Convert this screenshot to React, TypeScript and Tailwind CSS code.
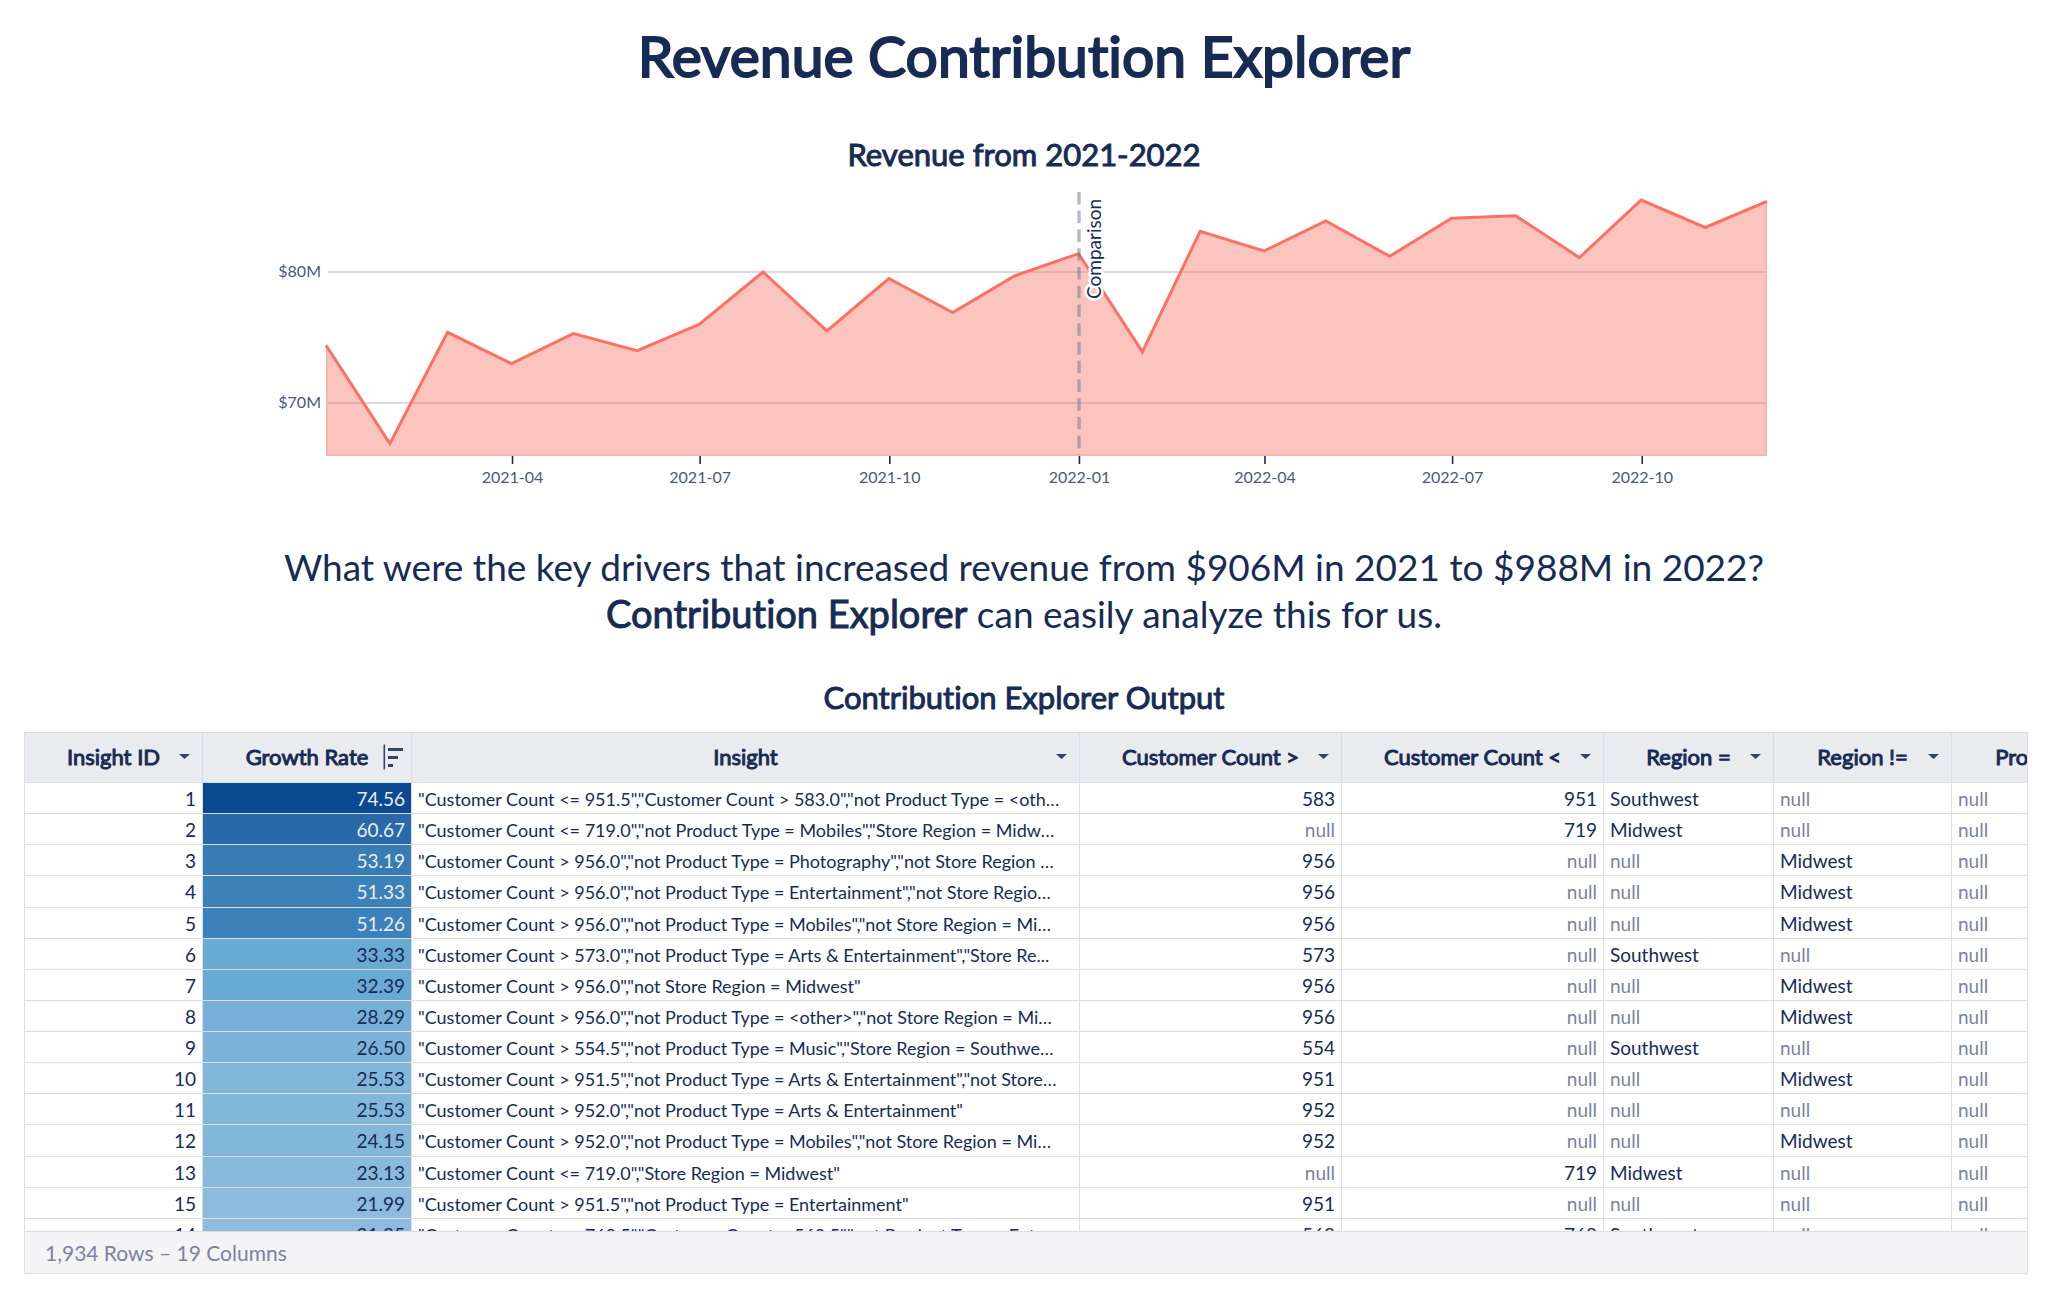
import { useState } from 'react';

const NAVY = '#172b54';

const columns = [
  { key: 'id', label: 'Insight ID', numeric: true },
  { key: 'growth', label: 'Growth Rate', numeric: true },
  { key: 'insight', label: 'Insight', numeric: false },
  { key: 'countGt', label: 'Customer Count >', numeric: true },
  { key: 'countLt', label: 'Customer Count <', numeric: true },
  { key: 'region', label: 'Region =', numeric: false },
  { key: 'regionNot', label: 'Region !=', numeric: false },
  { key: 'product', label: 'Product Type =', numeric: false },
] as const;

type Row = {
  id: number;
  growth: string;
  insight: string;
  countGt: number | null;
  countLt: number | null;
  region: string | null;
  regionNot: string | null;
  product: string | null;
};

const row = (
  id: number,
  growth: string,
  insight: string,
  countGt: number | null,
  countLt: number | null,
  region: string | null,
  regionNot: string | null
): Row => ({ id, growth, insight, countGt, countLt, region, regionNot, product: null });

const rows: Row[] = [
  row(1, '74.56', '"Customer Count <= 951.5","Customer Count > 583.0","not Product Type = <other>"', 583, 951, 'Southwest', null),
  row(2, '60.67', '"Customer Count <= 719.0","not Product Type = Mobiles","Store Region = Midwest"', null, 719, 'Midwest', null),
  row(3, '53.19', '"Customer Count > 956.0","not Product Type = Photography","not Store Region = Midwest"', 956, null, null, 'Midwest'),
  row(4, '51.33', '"Customer Count > 956.0","not Product Type = Entertainment","not Store Region = Midwest"', 956, null, null, 'Midwest'),
  row(5, '51.26', '"Customer Count > 956.0","not Product Type = Mobiles","not Store Region = Midwest"', 956, null, null, 'Midwest'),
  row(6, '33.33', '"Customer Count > 573.0","not Product Type = Arts & Entertainment","Store Re...', 573, null, 'Southwest', null),
  row(7, '32.39', '"Customer Count > 956.0","not Store Region = Midwest"', 956, null, null, 'Midwest'),
  row(8, '28.29', '"Customer Count > 956.0","not Product Type = <other>","not Store Region = Midwest"', 956, null, null, 'Midwest'),
  row(9, '26.50', '"Customer Count > 554.5","not Product Type = Music","Store Region = Southwest"', 554, null, 'Southwest', null),
  row(10, '25.53', '"Customer Count > 951.5","not Product Type = Arts & Entertainment","not Store Region = Midwest"', 951, null, null, 'Midwest'),
  row(11, '25.53', '"Customer Count > 952.0","not Product Type = Arts & Entertainment"', 952, null, null, null),
  row(12, '24.15', '"Customer Count > 952.0","not Product Type = Mobiles","not Store Region = Midwest"', 952, null, null, 'Midwest'),
  row(13, '23.13', '"Customer Count <= 719.0","Store Region = Midwest"', null, 719, 'Midwest', null),
  row(15, '21.99', '"Customer Count > 951.5","not Product Type = Entertainment"', 951, null, null, null),
  row(14, '21.85', '"Customer Count <= 768.5","Customer Count > 568.5","not Product Type = Entertainment"', 568, 768, 'Southwest', null),
];

// Blue scale for the growth rate cells
const growthClass = (value: number) => {
  if (value > 70) return 'bg-[#0b4a90] text-[#e8eef7]';
  if (value > 60) return 'bg-[#2969a7] text-[#e8eef7]';
  if (value > 52) return 'bg-[#377cb4] text-[#e8eef7]';
  if (value > 50) return 'bg-[#3c81b7] text-[#e8eef7]';
  if (value > 30) return 'bg-[#69aad4]';
  if (value > 27) return 'bg-[#77b0d7]';
  if (value > 26) return 'bg-[#7db3d8]';
  if (value > 24) return 'bg-[#82b7da]';
  if (value > 23) return 'bg-[#87badb]';
  return 'bg-[#8cbbdd]';
};

// Monthly revenue in millions, January 2021 to December 2022
const revenue = [
  74.4, 66.9, 75.4, 73.0, 75.3, 74.0, 76.0, 80.0, 75.5, 79.5, 76.9, 79.7,
  81.4, 73.9, 83.1, 81.6, 83.9, 81.2, 84.1, 84.3, 81.1, 85.5, 83.4, 85.4,
];

const ticks = ['2021-04', '2021-07', '2021-10', '2022-01', '2022-04', '2022-07', '2022-10'];

const START = Date.UTC(2021, 0, 1);
const END = Date.UTC(2022, 11, 1);
const x = (time: number) => 326 + ((time - START) / (END - START)) * 1441;
const y = (value: number) => 223 - (value - 70) * 13.1;

function RevenueChart() {
  const line = revenue.map((v, i) => `${x(Date.UTC(2021, i, 1)).toFixed(1)},${y(v).toFixed(1)}`).join(' ');

  return (
    <svg viewBox="0 0 2048 316" className="block w-full" role="img" aria-label="Revenue by month">
      {[80, 70].map((v) => (
        <g key={v}>
          <line x1="328" x2="1767" y1={y(v)} y2={y(v)} stroke="#d9dbe4" strokeWidth="2" />
          <text x="321" y={y(v) + 5} textAnchor="end" fontSize="16" fill="#4b5780">${v}M</text>
        </g>
      ))}
      <polygon points={`326,276 ${line} 1767,276`} fill="#f87367" fillOpacity="0.42" />
      <path d="M327 166V275H1766V22" fill="none" stroke="#fa7268" strokeOpacity="0.2" strokeWidth="2" />
      <polyline points={line} fill="none" stroke="#fb7263" strokeWidth="3" />
      {ticks.map((t) => {
        const tx = x(Date.parse(`${t}-01`)) + 1;
        return (
          <g key={t}>
            <line x1={tx} x2={tx} y1="276" y2="284" stroke={NAVY} strokeWidth="1.6" />
            <text x={tx} y="303" textAnchor="middle" fontSize="16" fill="#4b5780">{t}</text>
          </g>
        );
      })}
      <line x1="1079" x2="1079" y1="12" y2="275" stroke="#6b7394" strokeOpacity="0.5" strokeWidth="3.4" strokeDasharray="12.5 6.25" />
      <text
        transform="translate(1101 119) rotate(-90)"
        fontSize="19"
        fill={NAVY}
        stroke="#fff"
        strokeWidth="5"
        strokeLinejoin="round"
        paintOrder="stroke"
      >
        Comparison
      </text>
    </svg>
  );
}

function SortedIcon() {
  return (
    <svg viewBox="0 0 20 26" className="h-[26px] w-5" fill="#33446b">
      <path d="M0.5 0.5h1.6v25H0.5zM5 4h15v3H5zM5 12h10v3H5zM5 20h5v3H5z" />
    </svg>
  );
}

function CaretIcon() {
  return (
    <svg viewBox="0 0 11 5" className="h-[5px] w-[11px]" fill="#33446b">
      <path d="M0 0h11L5.5 5z" />
    </svg>
  );
}

export default function App() {
  const [sortKey, setSortKey] = useState('growth');

  return (
    <main className="font-['Lato',sans-serif] text-[#172b54] [font-variant-ligatures:none]">
      <h1 className="pt-[23px] text-center text-[57px] leading-[64px] [-webkit-text-stroke:2px]">Revenue Contribution Explorer</h1>

      {/* Revenue chart */}
      <section className="pt-[43px]">
        <h2 className="mb-0.5 text-center text-[31px] leading-[48px] [-webkit-text-stroke:1px]">Revenue from 2021-2022</h2>
        <RevenueChart />
      </section>

      <p className="pt-[47px] text-center text-[37px] leading-[47px]">
        What were the key drivers that increased revenue from $906M in 2021 to $988M in 2022?
        <br />
        <span className="text-[38px] leading-none [-webkit-text-stroke:1px]">Contribution Explorer</span> can easily analyze this for us.
      </p>

      {/* Explorer output */}
      <section className="px-6 pt-9">
        <h2 className="text-center text-[31px] leading-[48px] [-webkit-text-stroke:1px]">Contribution Explorer Output</h2>
        <div className="mt-[11px] -mr-1 border border-[#dcdde6]">
          <div className="h-[498px] overflow-hidden">
            <table className="h-[517px] w-[2160px] table-fixed border-separate border-spacing-0 text-[19px] leading-[28px]">
              <colgroup>
                <col className="w-[178px]" />
                <col className="w-[209px]" />
                <col className="w-[668px]" />
                <col className="w-[262px]" />
                <col className="w-[262px]" />
                <col className="w-[170px]" />
                <col className="w-[178px]" />
                <col />
              </colgroup>
              <thead>
                <tr className="bg-[#eaebef]">
                  {columns.map((col) => {
                    const sorted = sortKey === col.key;
                    return (
                      <th key={col.key} className="h-[50px] border-r border-b border-[#dcdde6] p-0 font-normal">
                        <button
                          onClick={() => setSortKey(col.key)}
                          className={`grid w-full items-center pb-0.5 ${sorted ? 'grid-cols-[20px_1fr_20px] px-2' : 'grid-cols-[11px_1fr_11px] px-3'}`}
                        >
                          <span className="col-start-2 text-center text-[22px] whitespace-nowrap [-webkit-text-stroke:1px]">{col.label}</span>
                          {sorted ? <SortedIcon /> : <CaretIcon />}
                        </button>
                      </th>
                    );
                  })}
                </tr>
              </thead>
              <tbody>
                {rows.map((r) => (
                  <tr key={r.id}>
                    {columns.map((col) => (
                      <td
                        key={col.key}
                        className={`h-[31px] truncate border-r border-b border-[#dcdde6] pt-0.5 pb-0 pl-[6px] ${col.numeric ? 'text-right' : 'text-left'} ${
                          col.key === 'insight' ? 'pr-[19px] text-[18px]' : 'pr-[6px]'
                        } ${col.key === 'growth' ? growthClass(Number(r.growth)) : ''} ${r[col.key] === null ? 'text-[#7c829f]' : ''}`}
                      >
                        {r[col.key] ?? 'null'}
                      </td>
                    ))}
                  </tr>
                ))}
              </tbody>
            </table>
          </div>
          <div className="border-t border-[#dcdde6] bg-[#f4f4f7] px-5 text-[21px] leading-[41px] text-[#7c829f]">
            1,934 Rows – 19 Columns
          </div>
        </div>
      </section>
    </main>
  );
}
